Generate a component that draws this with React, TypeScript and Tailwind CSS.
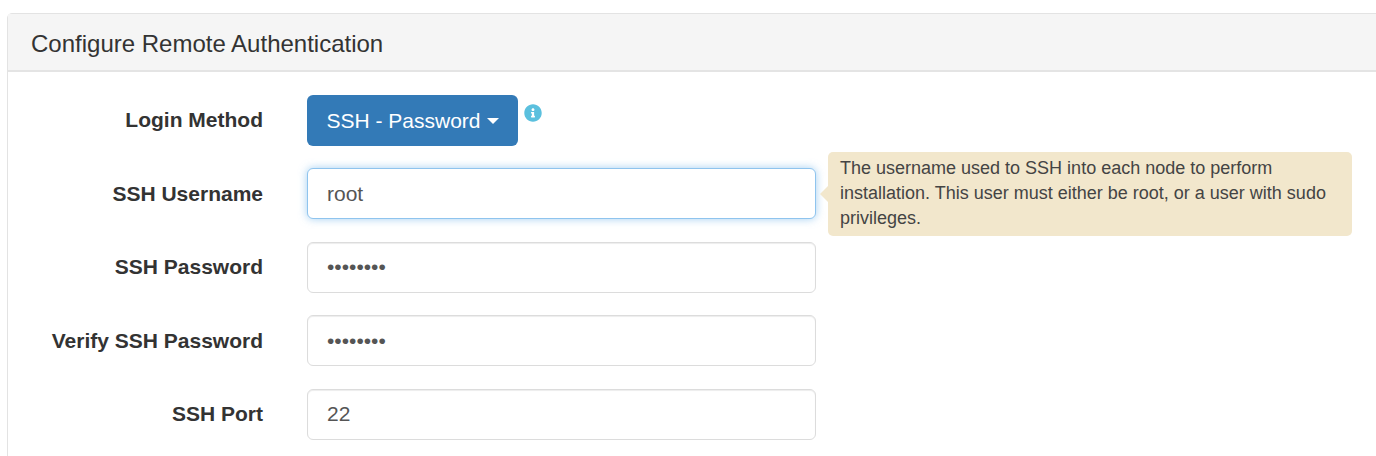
import { FaInfoCircle } from 'react-icons/fa'

const FIELDS = [
  { label: 'SSH Username', type: 'text', value: 'root', focused: true },
  { label: 'SSH Password', type: 'password', value: 'password', focused: false },
  { label: 'Verify SSH Password', type: 'password', value: 'password', focused: false },
  { label: 'SSH Port', type: 'text', value: '22', focused: false },
]

function Label({ children }: { children: string }) {
  return <label className="w-[255px] shrink-0 pb-[0.8px] text-right text-[21px] font-bold text-[#333]">{children}</label>
}

export default function App() {
  return (
    <div className="w-[1376px] h-[456px] overflow-hidden bg-white pt-[13px] pl-[7px] font-['Liberation_Sans',Arial,sans-serif]">
      <div className="w-[1400px] h-[500px] rounded-t-[5px] border border-[#e3e3e3]">
        {/* Heading */}
        <div className="h-[58px] flex items-center pl-[23px] pt-[3px] bg-[#f5f5f5] border-b-2 border-[#e4e4e4] text-[24px] text-[#333]">
          Configure Remote Authentication
        </div>

        {/* Form */}
        <div className="pt-[22.75px] flex flex-col gap-[22.5px]">
          <div className="flex items-center gap-[44px] h-[51px]">
            <Label>Login Method</Label>
            <div className="flex items-start gap-[6px] h-full">
              <button className="h-[51px] w-[211px] flex items-center justify-center gap-[6px] rounded-[6px] bg-[#337ab7] text-white text-[21px]">
                SSH - Password
                <span className="border-x-[6px] border-x-transparent border-t-[6px] border-t-white mt-[2px]" />
              </button>
              <FaInfoCircle size={18} className="mt-[9px] text-[#5bc0de]" />
            </div>
          </div>

          {FIELDS.map((f) => (
            <div key={f.label} className="flex items-center gap-[44px] h-[51px]">
              <Label>{f.label}</Label>
              <div className="relative">
                <input
                  type={f.type}
                  defaultValue={f.value}
                  className={`w-[509px] h-[51px] px-[19px] rounded-[6px] bg-white text-[21px] text-[#555] outline-none border-[1.5px] ${
                    f.focused
                      ? 'border-[#8fc4ee] shadow-[0_0_8px_rgba(102,175,233,0.6)]'
                      : 'border-[#dcdcdc] shadow-[inset_0_1px_1px_rgba(0,0,0,0.075)]'
                  }`}
                />
                {f.focused && (
                  <div className="absolute left-[521px] top-[-16px] w-[524px] h-[84px] pl-[12px] pr-[13px] pt-[4px] rounded-[5px] bg-[#f2e7cc] text-[18px] leading-[25px] text-[#444]">
                    <span className="absolute left-[-8px] top-[34px] border-y-[8px] border-y-transparent border-r-[8px] border-r-[#f2e7cc]" />
                    The username used to SSH into each node to perform installation. This user must either be root, or a user with sudo privileges.
                  </div>
                )}
              </div>
            </div>
          ))}
        </div>
      </div>
    </div>
  )
}
